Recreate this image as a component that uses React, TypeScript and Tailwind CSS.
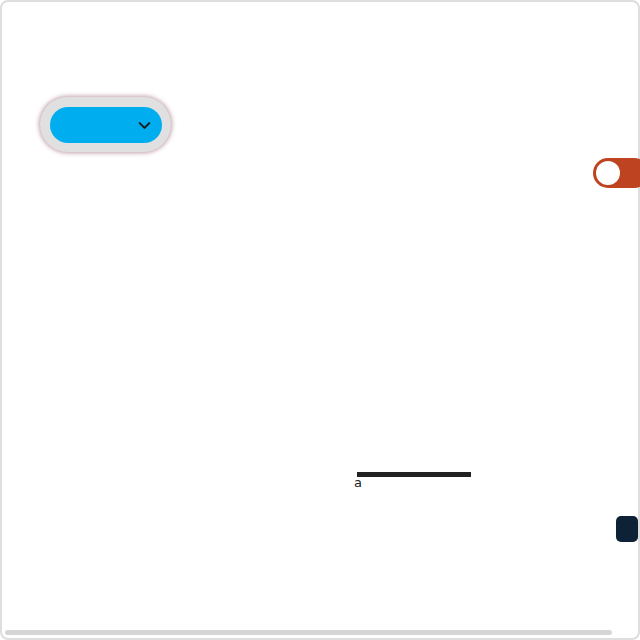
import { ChevronDown } from 'lucide-react'

export default function App() {
  return (
    <div className="w-[640px] h-[640px] overflow-hidden bg-white">
      <div className="w-[640px] h-[640px] border-2 border-[#dedede] rounded-lg flex flex-col font-['DejaVu_Sans',sans-serif]">
        {/* dropdown */}
        <div className="mt-[95px] ml-[38px] w-[131px] h-[55px] rounded-full bg-[#e0e0e0] p-[10px] shadow-[0_0_4px_1px_rgba(140,80,95,0.55)]">
          <button className="w-[112px] h-[36px] rounded-full bg-[#00aef0] flex items-center justify-end pr-[8px]">
            <ChevronDown size={19} strokeWidth={2.6} color="#1a1a1a" />
          </button>
        </div>

        {/* toggle */}
        <div className="mt-[6px] self-end mr-[-11px] w-[56px] h-[30px] rounded-full bg-[#be4320] p-[3px] flex items-center">
          <div className="w-[24px] h-[24px] rounded-full bg-white" />
        </div>

        {/* line + label */}
        <div className="mt-[284px] ml-[352px] flex flex-col">
          <div className="ml-[3px] w-[114px] h-[5px] bg-[#222222]" />
          <span className="text-[13px] leading-[11px] text-[#222]">a</span>
        </div>

        {/* dark chip */}
        <div className="mt-[28px] self-end w-[22px] h-[26px] rounded-[5px] bg-[#0d2137]" />

        {/* scrollbar */}
        <div className="mt-auto mb-[3px] ml-[3px] w-[607px] h-[5px] rounded-full bg-[#d6d6d6]" />
      </div>
    </div>
  )
}
